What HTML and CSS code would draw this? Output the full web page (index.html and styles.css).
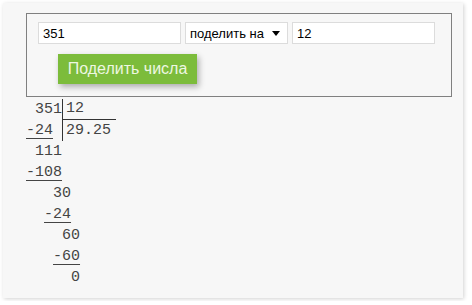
FILE: index.html
```html
<!DOCTYPE html>
<html lang="ru">
<head>
    <meta charset="UTF-8">
    <title>Деление в столбик</title>
    <link rel="stylesheet" href="styles.css">
</head>
<body>

    <div class="card">
        <div class="form-box">
            <div class="fields">
                <input class="num" type="text" value="351">
                <div class="select-wrap">
                    <select class="op">
                        <option>поделить на</option>
                        <option>умножить на</option>
                    </select>
                </div>
                <input class="num" type="text" value="12">
            </div>
            <button class="btn">Поделить числа</button>
        </div>

        <!-- long division -->
        <div class="division">
            <div class="head">
                <div class="left">
                    <div class="row"> 351</div>
                    <div class="row"><span class="u">-24</span></div>
                </div>
                <div class="right">
                    <div class="row divisor">12</div>
                    <div class="row">29.25</div>
                </div>
            </div>
            <div class="row"> 111</div>
            <div class="row"><span class="u">-108</span></div>
            <div class="row">   30</div>
            <div class="row">  <span class="u">-24</span></div>
            <div class="row">    60</div>
            <div class="row">   <span class="u">-60</span></div>
            <div class="row">     0</div>
        </div>
    </div>

</body>
</html>
```

FILE: styles.css
```css
body {
    margin: 0;
    background: #fff;
    font-family: "Liberation Sans", Arial, sans-serif;
}

.card {
    margin: 3px;
    width: 460px;
    height: 295px;
    box-sizing: border-box;
    padding: 10px 12px 0 23px;
    background: #f7f7f7;
    box-shadow: 1px 1px 4px rgba(0, 0, 0, 0.18);
}

.form-box {
    width: 426px;
    height: 84px;
    box-sizing: border-box;
    border: 1px solid #808080;
    padding: 8px 0 0 11px;
}

.fields {
    display: flex;
    gap: 4px;
}

.num {
    width: 143px;
    height: 22px;
    box-sizing: border-box;
    margin: 0;
    padding: 0 4px;
    border: 1px solid #dcdcdc;
    background: #fff;
    font-family: "Liberation Sans", Tahoma, sans-serif;
    font-size: 13px;
    color: #000;
}

.select-wrap {
    position: relative;
    width: 103px;
}

.select-wrap::after {
    content: "";
    position: absolute;
    right: 8px;
    top: 9px;
    border-left: 4px solid transparent;
    border-right: 4px solid transparent;
    border-top: 5px solid #000;
    pointer-events: none;
}

.op {
    appearance: none;
    -webkit-appearance: none;
    width: 100%;
    height: 22px;
    box-sizing: border-box;
    margin: 0;
    padding: 0 4px;
    border: 1px solid #dcdcdc;
    border-radius: 0;
    background: #fff;
    font-family: "Liberation Sans", Tahoma, sans-serif;
    font-size: 13px;
    color: #000;
}

.btn {
    display: block;
    margin: 10px 0 0 20px;
    width: 139px;
    height: 30px;
    padding: 0;
    border: none;
    background: #7cbc3b;
    color: #eef7e2;
    font-family: "Liberation Sans", Arial, sans-serif;
    font-size: 16px;
    box-shadow: 2px 3px 6px rgba(0, 0, 0, 0.3);
    cursor: pointer;
}

.division {
    margin-top: 2px;
    font-family: "Liberation Mono", "Courier New", monospace;
    font-size: 15px;
    color: #444;
}

.row {
    height: 21px;
    line-height: 21px;
    white-space: pre;
}

.u {
    text-decoration: underline;
    text-underline-offset: 4px;
    text-decoration-thickness: 1px;
}

.head {
    display: flex;
}

.left {
    width: 4ch;
}

.right {
    width: 50px;
    border-left: 1px solid #333;
    padding-left: 3px;
}

.divisor {
    box-sizing: border-box;
    line-height: 20px;
    border-bottom: 1px solid #333;
    margin-left: -3px;
    padding-left: 3px;
}
```
